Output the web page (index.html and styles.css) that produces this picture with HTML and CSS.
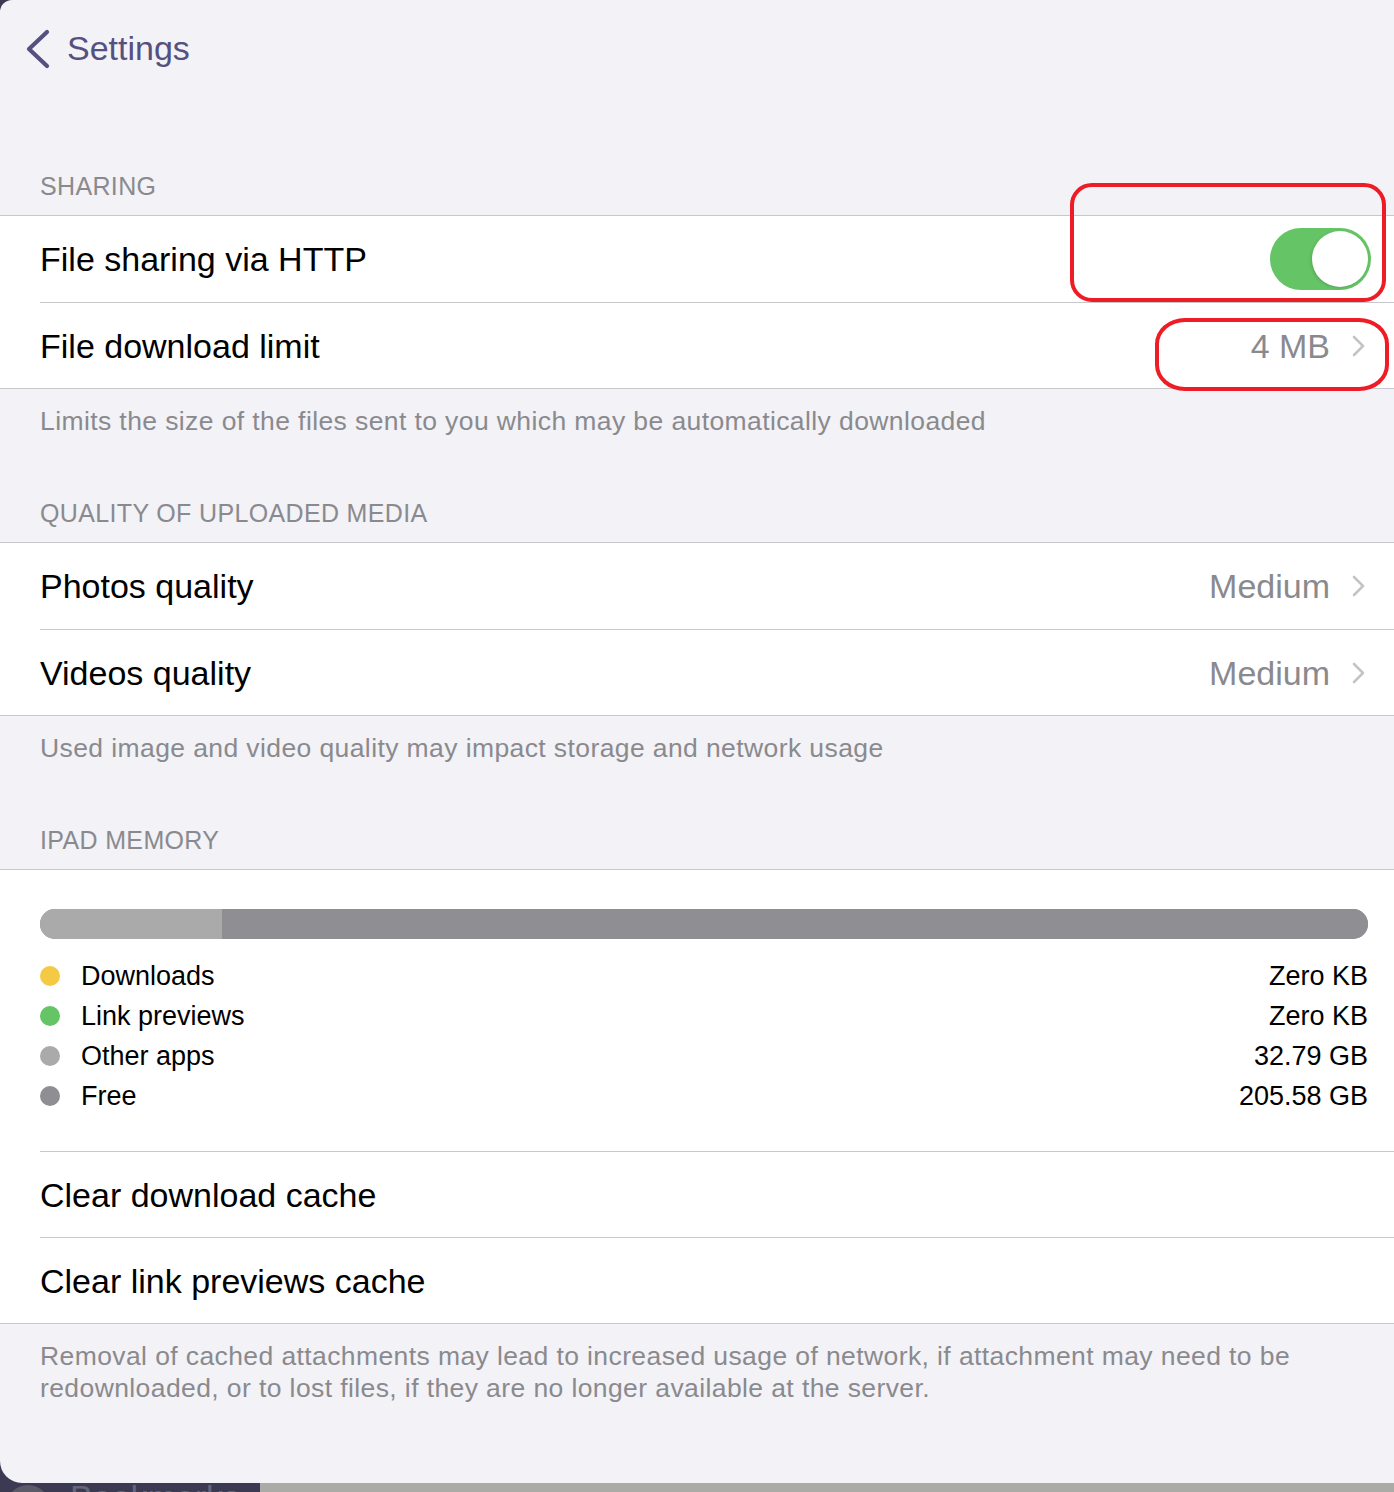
FILE: index.html
```html
<!DOCTYPE html>
<html lang="en">
<head>
<meta charset="utf-8">
<title>Settings</title>
<link rel="stylesheet" href="styles.css">
</head>
<body>
<div class="sheet">
  <header class="nav">
    <svg class="back" width="26" height="40" viewBox="0 0 26 40" aria-hidden="true"><path d="M21 3 L3 20 L21 37" fill="none" stroke="#55507f" stroke-width="4.2" stroke-linecap="round" stroke-linejoin="round"/></svg>
    <span class="nav-title">Settings</span>
  </header>

  <section class="group first">
    <div class="group-header">SHARING</div>
    <div class="cells">
      <div class="cell">
        <span class="label">File sharing via HTTP</span>
        <span class="toggle"><span class="knob"></span></span>
      </div>
      <div class="cell">
        <span class="label">File download limit</span>
        <span class="detail">4 MB<svg class="chev" width="14" height="22" viewBox="0 0 14 22" aria-hidden="true"><path d="M3 2 L12 11 L3 20" fill="none" stroke="#c4c4c7" stroke-width="2.6" stroke-linecap="round" stroke-linejoin="round"/></svg></span>
      </div>
    </div>
    <div class="group-footer">Limits the size of the files sent to you which may be automatically downloaded</div>
  </section>

  <section class="group">
    <div class="group-header">QUALITY OF UPLOADED MEDIA</div>
    <div class="cells">
      <div class="cell">
        <span class="label">Photos quality</span>
        <span class="detail">Medium<svg class="chev" width="14" height="22" viewBox="0 0 14 22" aria-hidden="true"><path d="M3 2 L12 11 L3 20" fill="none" stroke="#c4c4c7" stroke-width="2.6" stroke-linecap="round" stroke-linejoin="round"/></svg></span>
      </div>
      <div class="cell">
        <span class="label">Videos quality</span>
        <span class="detail">Medium<svg class="chev" width="14" height="22" viewBox="0 0 14 22" aria-hidden="true"><path d="M3 2 L12 11 L3 20" fill="none" stroke="#c4c4c7" stroke-width="2.6" stroke-linecap="round" stroke-linejoin="round"/></svg></span>
      </div>
    </div>
    <div class="group-footer">Used image and video quality may impact storage and network usage</div>
  </section>

  <section class="group">
    <div class="group-header">IPAD MEMORY</div>
    <div class="cells">
      <div class="memory">
        <div class="bar">
          <span class="bar-seg bar-other" style="width: 13.7%"></span>
          <span class="bar-seg bar-free"></span>
        </div>
        <ul class="legend">
          <li class="legend-row"><span class="dot dot-yellow"></span><span class="legend-name">Downloads</span><span class="legend-value">Zero KB</span></li>
          <li class="legend-row"><span class="dot dot-green"></span><span class="legend-name">Link previews</span><span class="legend-value">Zero KB</span></li>
          <li class="legend-row"><span class="dot dot-light"></span><span class="legend-name">Other apps</span><span class="legend-value">32.79 GB</span></li>
          <li class="legend-row"><span class="dot dot-dark"></span><span class="legend-name">Free</span><span class="legend-value">205.58 GB</span></li>
        </ul>
      </div>
      <div class="cell">
        <span class="label">Clear download cache</span>
      </div>
      <div class="cell">
        <span class="label">Clear link previews cache</span>
      </div>
    </div>
    <div class="group-footer">Removal of cached attachments may lead to increased usage of network, if attachment may need to be redownloaded, or to lost files, if they are no longer available at the server.</div>
  </section>

  <div class="annot annot-toggle"></div>
  <div class="annot annot-limit"></div>
</div>
<div class="dock">
  <div class="dock-dark"><span class="dock-icon"></span><span class="dock-text">Bookmarks</span></div>
  <div class="dock-light"></div>
</div>
</body>
</html>
```

FILE: styles.css
```css
* { box-sizing: border-box; }

html, body {
  margin: 0;
  padding: 0;
}

body {
  width: 1394px;
  height: 1492px;
  overflow: hidden;
  background: #3b3a52;
  font-family: "Liberation Sans", Arial, sans-serif;
  color: #000;
}

.sheet {
  position: relative;
  height: 1483px;
  background: #f2f2f7;
  border-top-left-radius: 12px;
  border-bottom-left-radius: 22px;
  overflow: hidden;
}

.nav {
  height: 96px;
  display: flex;
  align-items: center;
  padding-left: 26px;
}

.back {
  display: block;
  margin-top: 1px;
}

.nav-title {
  margin-left: 15px;
  font-size: 34px;
  color: #55507f;
  line-height: 40px;
}

.group { margin-top: 61px; }
.group.first { margin-top: 75px; }

.group-header {
  padding: 0 40px 14px;
  font-size: 25px;
  letter-spacing: 0.35px;
  line-height: 30px;
  color: #8a8a8e;
}

.group-footer {
  padding: 16px 70px 0 40px;
  font-size: 26.5px;
  letter-spacing: 0.4px;
  line-height: 32px;
  color: #8a8a8e;
}

.cells {
  background: #fff;
  border-top: 1px solid #c8c7cc;
  border-bottom: 1px solid #c8c7cc;
  padding-left: 40px;
}

.cell {
  height: 86px;
  display: flex;
  align-items: center;
  justify-content: space-between;
  padding-right: 23px;
}

.cell + .cell,
.memory + .cell {
  border-top: 1px solid #c8c7cc;
}

.label {
  font-size: 34px;
  line-height: 40px;
}

.detail {
  display: flex;
  align-items: center;
  font-size: 34px;
  line-height: 40px;
  color: #8a8a8e;
  padding-right: 6px;
}

.chev {
  display: block;
  margin-left: 21px;
}

.toggle {
  position: relative;
  width: 101px;
  height: 62px;
  border-radius: 31px;
  background: #65c466;
  display: flex;
  justify-content: flex-end;
  align-items: center;
  padding-right: 3px;
}

.knob {
  width: 56px;
  height: 56px;
  border-radius: 50%;
  background: #fff;
  box-shadow: -1px 1px 3px rgba(0, 0, 0, 0.15);
}

.memory {
  padding: 39px 26px 35px 0;
}

.bar {
  display: flex;
  height: 30px;
  border-radius: 15px;
  overflow: hidden;
  background: #8e8e93;
}

.bar-other { background: #aaaaaa; }
.bar-free { flex: 1; background: #8e8e93; }

.legend {
  list-style: none;
  margin: 17px 0 0;
  padding: 0;
}

.legend-row {
  display: flex;
  align-items: center;
  height: 40px;
  font-size: 27px;
}

.dot {
  width: 20px;
  height: 20px;
  border-radius: 50%;
  margin-right: 21px;
}

.dot-yellow { background: #f4ca44; }
.dot-green { background: #65c466; }
.dot-light { background: #aaaaaa; }
.dot-dark { background: #8e8e93; }

.legend-name { flex: 1; }
.legend-value { text-align: right; }

.annot {
  position: absolute;
  border: 4px solid #ee1c25;
}

.annot-toggle {
  left: 1070px;
  top: 183px;
  width: 316px;
  height: 119px;
  border-radius: 22px;
}

.annot-limit {
  left: 1155px;
  top: 318px;
  width: 234px;
  height: 73px;
  border-radius: 30px / 26px;
}

.dock {
  display: flex;
  height: 9px;
  overflow: hidden;
}

.dock-dark {
  width: 260px;
  background: #3b3a52;
  display: flex;
  align-items: flex-start;
}

.dock-icon {
  width: 44px;
  height: 44px;
  margin: 2px 0 0 6px;
  border-radius: 50%;
  background: #5b5a68;
}

.dock-text {
  margin: -6px 0 0 20px;
  font-size: 34px;
  line-height: 40px;
  color: #65657a;
}

.dock-light {
  flex: 1;
  background: #aaaaa6;
}
```
